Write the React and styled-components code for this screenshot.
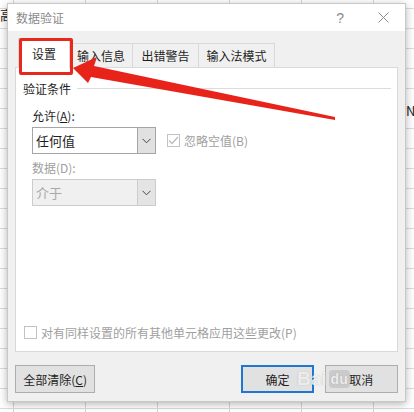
import React from 'react';
import styled, { createGlobalStyle } from 'styled-components';

const GlobalStyle = createGlobalStyle`
  html, body {
    margin: 0;
    padding: 0;
    background: #ffffff;
  }
  body {
    font-family: "Noto Sans CJK SC", "Microsoft YaHei", sans-serif;
    font-size: 12px;
    color: #1e1e1e;
  }
`;

const Stage = styled.div`
  position: relative;
  width: 414px;
  height: 412px;
  overflow: hidden;
  background-color: #ffffff;
  background-image:
    linear-gradient(to right, #d6d6d6 1px, transparent 1px),
    linear-gradient(to bottom, #dcdcdc 1px, transparent 1px);
  background-size: 72px 100%, 100% 20px;
  background-position: 13px 0, 0 8px;
  padding-top: 3px;
  padding-left: 7px;
  box-sizing: border-box;
`;

const SheetText = styled.div`
  position: absolute;
  font-size: 13px;
  color: #222;
  left: ${p => p.x}px;
  top: ${p => p.y}px;
`;

const Dialog = styled.div`
  position: relative;
  width: 399px;
  height: 399px;
  display: flex;
  flex-direction: column;
  background: #f0f0f0;
  border: 1px solid #c8c8c8;
  box-sizing: border-box;
  box-shadow: 0 2px 8px rgba(0, 0, 0, 0.3);
`;

const TitleBar = styled.div`
  height: 27px;
  display: flex;
  align-items: center;
  background: #ffffff;
  padding-left: 8px;
  padding-right: 16px;
  color: #8a8a8a;
`;

const Title = styled.div`
  flex: 1;
  font-size: 12px;
`;

const Help = styled.div`
  font-size: 14px;
  color: #8a8a8a;
  margin-right: 34px;
  font-family: "Liberation Sans", sans-serif;
`;

const Body = styled.div`
  flex: 1;
  display: flex;
  flex-direction: column;
  padding: 7px 7px 8px 7px;
`;

const TabRow = styled.div`
  display: flex;
  align-items: flex-end;
  height: 29px;
  padding-left: 3px;
  position: relative;
  z-index: 1;
`;

const Tab = styled.div`
  height: ${p => (p.active ? 30 : 25)}px;
  width: ${p => p.w}px;
  box-sizing: border-box;
  display: flex;
  align-items: center;
  justify-content: center;
  background: ${p => (p.active ? '#ffffff' : '#f0f0f0')};
  border: 1px solid #d9d9d9;
  border-bottom: ${p => (p.active ? '1px solid #ffffff' : '1px solid #d9d9d9')};
  margin-left: ${p => (p.active ? 0 : -1)}px;
  margin-bottom: -1px;
  font-size: 12px;
  color: #1e1e1e;
`;

const Panel = styled.div`
  height: 285px;
  background: #ffffff;
  border: 1px solid #d9d9d9;
  box-sizing: border-box;
  display: flex;
  flex-direction: column;
  padding: 12px 6px 10px 7px;
`;

const Legend = styled.div`
  display: flex;
  align-items: center;
  gap: 6px;
  height: 16px;
  &::after {
    content: '';
    flex: 1;
    height: 1px;
    background: #dcdcdc;
  }
`;

const Fields = styled.div`
  display: flex;
  flex-direction: column;
  padding-left: 9px;
  margin-top: 12px;
`;

const Label = styled.div`
  height: 16px;
  line-height: 16px;
  color: ${p => (p.disabled ? '#a0a0a0' : '#1e1e1e')};
  margin-top: ${p => p.mt || 0}px;
  margin-bottom: 3px;
`;

const FieldRow = styled.div`
  display: flex;
  align-items: center;
`;

const Select = styled.div`
  width: 124px;
  height: 27px;
  box-sizing: border-box;
  display: flex;
  border: 1px solid ${p => (p.disabled ? '#cccccc' : '#a5a5a5')};
  background: ${p => (p.disabled ? '#f0f0f0' : '#ffffff')};
`;

const SelectValue = styled.div`
  flex: 1;
  display: flex;
  align-items: center;
  padding-left: 3px;
  font-size: 13px;
  color: ${p => (p.disabled ? '#a8a8a8' : '#1e1e1e')};
`;

const SelectButton = styled.div`
  width: 17px;
  display: flex;
  align-items: center;
  justify-content: center;
  background: ${p => (p.disabled ? '#e4e4e4' : '#e1e1e1')};
  border-left: 1px solid ${p => (p.disabled ? '#cccccc' : '#a5a5a5')};
`;

const CheckLabel = styled.label`
  display: flex;
  align-items: center;
  gap: 4px;
  color: #a0a0a0;
  margin-left: ${p => p.ml || 0}px;
`;

const Box = styled.span`
  width: 13px;
  height: 13px;
  box-sizing: border-box;
  border: 1px solid #c2c2c2;
  background: #ffffff;
  display: flex;
  align-items: center;
  justify-content: center;
`;

const Bottom = styled.div`
  margin-top: auto;
  padding-left: 1px;
`;

const Footer = styled.div`
  display: flex;
  align-items: center;
  margin-top: 13px;
  height: 28px;
`;

const Button = styled.div`
  height: 28px;
  width: ${p => p.w}px;
  box-sizing: border-box;
  display: flex;
  align-items: center;
  justify-content: center;
  background: #e1e1e1;
  border: ${p => (p.primary ? '2px solid #1f77cf' : '1px solid #adadad')};
  margin-left: ${p => p.ml || 0}px;
  font-size: 12px;
  color: #1e1e1e;
`;

const Underline = styled.span`
  text-decoration: underline;
`;

const Highlight = styled.div`
  position: absolute;
  left: 11px;
  top: 34px;
  width: 54px;
  height: 37px;
  box-sizing: border-box;
  border: 3px solid #e8281c;
  border-radius: 2px;
  z-index: 5;
`;

const ArrowLayer = styled.svg`
  position: absolute;
  left: 0;
  top: 0;
  z-index: 6;
  pointer-events: none;
`;

const Watermark = styled.div`
  position: absolute;
  left: 289px;
  top: 364px;
  display: flex;
  align-items: center;
  gap: 2px;
  z-index: 4;
  font-family: "Liberation Sans", sans-serif;
  font-weight: bold;
  font-size: 19px;
  line-height: 22px;
  color: rgba(255, 255, 255, 0.8);
  text-shadow: 0 0 1px rgba(120, 120, 120, 0.5);
`;

const Du = styled.span`
  background: rgba(150, 150, 150, 0.3);
  border-radius: 4px;
  padding: 0 2px;
  font-size: 14px;
  line-height: 18px;
`;

const Chevron = () => (
  <svg width="9" height="6" viewBox="0 0 9 6">
    <path d="M0.5 0.8 L4.5 4.8 L8.5 0.8" fill="none" stroke="#444" strokeWidth="1" />
  </svg>
);

const CloseIcon = () => (
  <svg width="11" height="11" viewBox="0 0 11 11">
    <path d="M0.5 0.5 L10.5 10.5 M10.5 0.5 L0.5 10.5" stroke="#8a8a8a" strokeWidth="1" />
  </svg>
);

const Check = () => (
  <svg width="11" height="9" viewBox="0 0 11 9">
    <path d="M1 4.5 L4 7.5 L10 1" fill="none" stroke="#bdbdbd" strokeWidth="1.3" />
  </svg>
);

export default function App() {
  return (
    <Stage>
      <GlobalStyle />
      <SheetText x={0} y={5}>高</SheetText>
      <SheetText x={406} y={101}>N</SheetText>
      <Dialog>
        <TitleBar>
          <Title>数据验证</Title>
          <Help>?</Help>
          <CloseIcon />
        </TitleBar>
        <Body>
          <TabRow>
            <Tab active w={52}>设置</Tab>
            <Tab w={64}>输入信息</Tab>
            <Tab w={67}>出错警告</Tab>
            <Tab w={77}>输入法模式</Tab>
          </TabRow>
          <Panel>
            <Legend>验证条件</Legend>
            <Fields>
              <Label>允许(<Underline>A</Underline>):</Label>
              <FieldRow>
                <Select>
                  <SelectValue>任何值</SelectValue>
                  <SelectButton><Chevron /></SelectButton>
                </Select>
                <CheckLabel ml={11}>
                  <Box><Check /></Box>
                  忽略空值(B)
                </CheckLabel>
              </FieldRow>
              <Label disabled mt={6}>数据(D):</Label>
              <Select disabled>
                <SelectValue disabled>介于</SelectValue>
                <SelectButton disabled><Chevron /></SelectButton>
              </Select>
            </Fields>
            <Bottom>
              <CheckLabel>
                <Box />
                对有同样设置的所有其他单元格应用这些更改(P)
              </CheckLabel>
            </Bottom>
          </Panel>
          <Footer>
            <Button w={81}>全部清除(<Underline>C</Underline>)</Button>
            <Button primary w={73} ml={146}>确定</Button>
            <Button w={74} ml={11}>取消</Button>
          </Footer>
        </Body>
        <Highlight />
        <Watermark>
          Bai<Du>du</Du>
        </Watermark>
      </Dialog>
      <ArrowLayer width="414" height="412" viewBox="0 0 414 412">
        <polygon
          points="73,68 97,57 94,66 335,117 335,120 91,77 88,83"
          fill="#e8231a"
        />
      </ArrowLayer>
    </Stage>
  );
}
